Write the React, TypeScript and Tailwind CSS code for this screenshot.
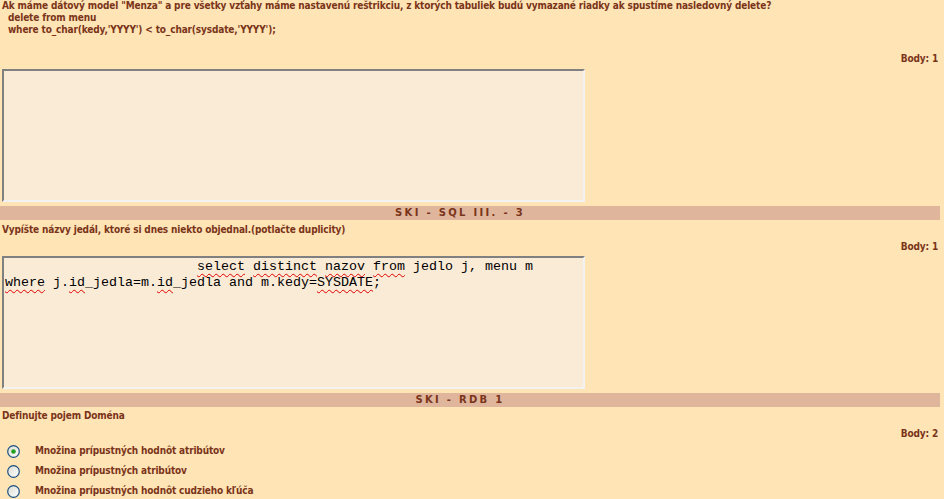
import React from "react";

const text =
  "text-[#7a341a] font-bold text-[10px] leading-[12px] font-['DejaVu_Sans_Condensed','DejaVu_Sans',sans-serif] tracking-[-0.15px]";

function Band({ label }: { label: string }) {
  return (
    <div className="h-[14px] bg-[#dfb59c] flex items-center justify-center pr-[20px]">
      <span className="text-[10px] leading-[14px] font-bold tracking-[2.3px] text-[#7a341a]">
        {label}
      </span>
    </div>
  );
}

function Radio({ checked }: { checked?: boolean }) {
  return (
    <svg width="13" height="13" viewBox="0 0 13 13" className="shrink-0">
      <defs>
        <linearGradient id="rg" x1="0" y1="0" x2="1" y2="1">
          <stop offset="0" stopColor="#dcdcd4" />
          <stop offset="1" stopColor="#ffffff" />
        </linearGradient>
      </defs>
      <circle cx="6.5" cy="6.5" r="5.8" fill="url(#rg)" stroke="#1c5180" strokeWidth="1.2" />
      {checked && <circle cx="6.5" cy="6.5" r="2.3" fill="#21a121" />}
    </svg>
  );
}

const Sq = ({ children }: { children: React.ReactNode }) => (
  <span className="underline decoration-wavy decoration-[#e00000] decoration-1 underline-offset-[3px]">
    {children}
  </span>
);

export default function App() {
  return (
    <div className="min-h-screen bg-[#ffe4b5] font-['DejaVu_Sans',Verdana,sans-serif]">
      <div className="w-[940px]">
        {/* question 1 */}
        <div className={`${text} pl-[2px] whitespace-pre`}>
          <div>Ak máme dátový model "Menza" a pre všetky vzťahy máme nastavenú reštrikciu, z ktorých tabuliek budú vymazané riadky ak spustíme nasledovný delete?</div>
          <div>{"  delete from menu"}</div>
          <div>{"  where to_char(kedy,'YYYY') < to_char(sysdate,'YYYY');"}</div>
        </div>
        <div className={`${text} text-right pr-[2px] mt-[17px]`}>Body: 1</div>
        <div className="ml-[2px] mt-[4px] w-[583px] h-[133px] border-2 border-t-[#808080] border-l-[#808080] border-r-[#f2f2f2] border-b-[#f2f2f2] bg-[#faebd7]" />

        <div className="mt-[4px]">
          <Band label="SKI - SQL III. - 3" />
        </div>

        {/* question 2 */}
        <div className={`${text} pl-[2px] mt-[4px]`}>
          Vypíšte názvy jedál, ktoré si dnes niekto objednal.(potlačte duplicity)
        </div>
        <div className={`${text} text-right pr-[2px] mt-[5px]`}>Body: 1</div>
        <div className="ml-[2px] mt-[3px] w-[583px] h-[133px] border-2 border-t-[#808080] border-l-[#808080] border-r-[#f2f2f2] border-b-[#f2f2f2] bg-[#faebd7] pl-px pt-px font-['Liberation_Mono',monospace] text-[13.33px] leading-[16px] text-black whitespace-pre">
          <div>
            {"                        "}
            <Sq>select</Sq> <Sq>distinct</Sq> <Sq>nazov</Sq> <Sq>from</Sq> jedlo j, menu m
          </div>
          <div>
            <Sq>where</Sq> j.<Sq>id</Sq>_jedla=m.<Sq>id</Sq>_jedla and m.kedy=<Sq>SYSDATE</Sq>;
          </div>
        </div>

        <div className="mt-[4px]">
          <Band label="SKI - RDB 1" />
        </div>

        {/* question 3 */}
        <div className={`${text} pl-[2px] mt-[3px]`}>Definujte pojem Doména</div>
        <div className={`${text} text-right pr-[2px] mt-[6px]`}>Body: 2</div>
        <div className="mt-px flex flex-col">
          {[
            { label: "Množina prípustných hodnôt atribútov", checked: true },
            { label: "Množina prípustných atribútov" },
            { label: "Množina prípustných hodnôt cudzieho kľúča" },
          ].map((o) => (
            <div key={o.label} className="h-[20px] flex items-center pl-[7px]">
              <Radio checked={o.checked} />
              <span className={`${text} ml-[15px]`}>{o.label}</span>
            </div>
          ))}
        </div>
      </div>
    </div>
  );
}
